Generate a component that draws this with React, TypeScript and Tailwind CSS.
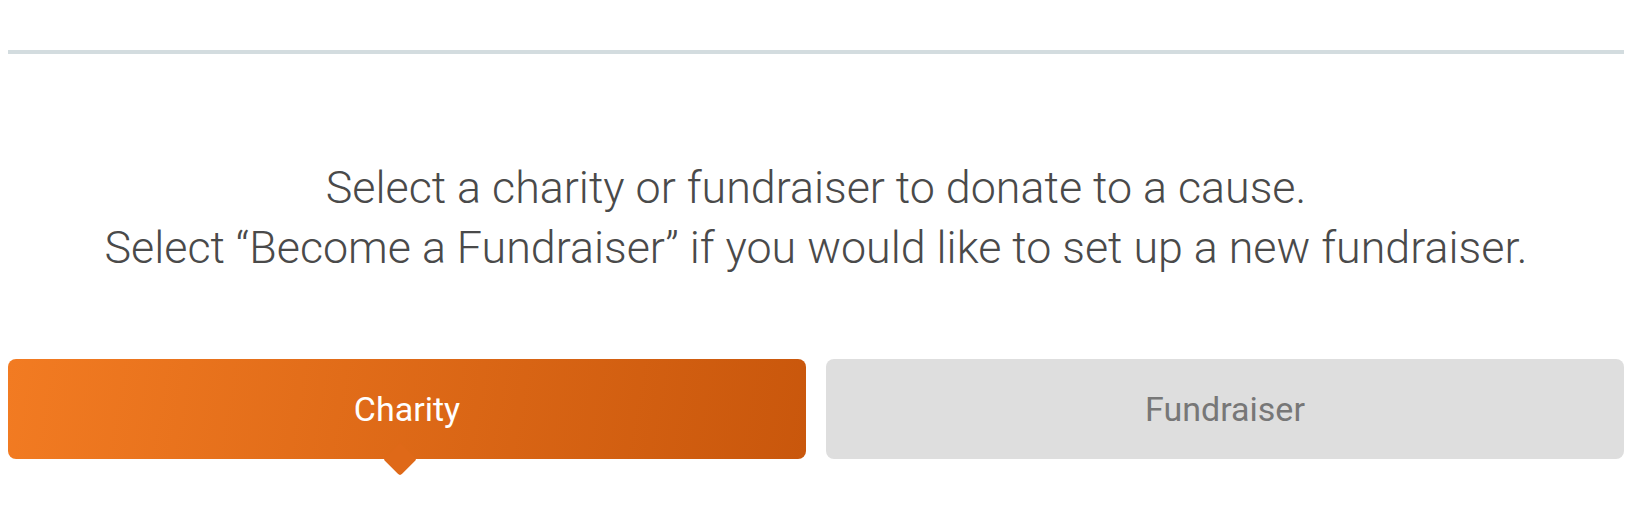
export default function App() {
  return (
    <div className="w-full h-[518px] bg-white px-2 pt-[50px] font-['Roboto',sans-serif]">
      {/* Divider */}
      <div className="h-1 w-full bg-[#d3dcdf]" />

      {/* Intro text */}
      <div className="mt-[104px] text-center text-[44.8px] leading-[60px] font-light text-[#4a4a4a]">
        <p>Select a charity or fundraiser to donate to a cause.</p>
        <p>Select “Become a Fundraiser” if you would like to set up a new fundraiser.</p>
      </div>

      {/* Tabs */}
      <div className="mt-[81px] flex gap-5">
        <button className="relative flex-1 h-[100px] rounded-lg bg-[linear-gradient(100deg,#f27b22,#c9570c)] text-white text-[34px] font-normal">
          Charity
          <span className="absolute left-[380px] -bottom-[12px] h-6 w-6 rotate-45 rounded-[3px] bg-[#df6918]" />
        </button>
        <button className="flex-1 h-[100px] rounded-lg bg-[#dedede] text-[#777777] text-[34px]">
          Fundraiser
        </button>
      </div>
    </div>
  );
}
